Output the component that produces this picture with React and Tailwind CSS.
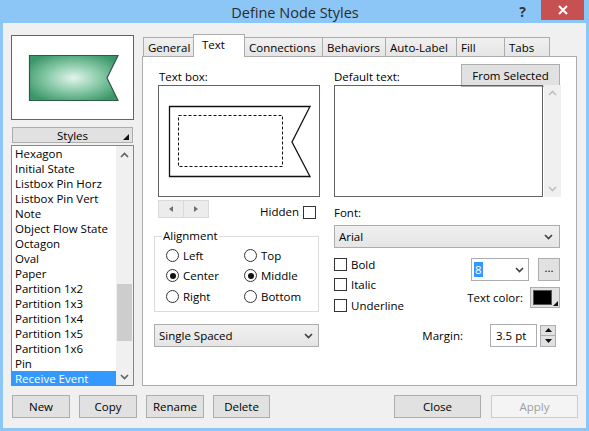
import React from "react";

const styles = [
  "Hexagon",
  "Initial State",
  "Listbox Pin Horz",
  "Listbox Pin Vert",
  "Note",
  "Object Flow State",
  "Octagon",
  "Oval",
  "Paper",
  "Partition 1x2",
  "Partition 1x3",
  "Partition 1x4",
  "Partition 1x5",
  "Partition 1x6",
  "Pin",
  "Receive Event",
];

const tabs = [
  { name: "General", w: "w-[51px]" },
  { name: "Text", w: "w-[52px]", active: true },
  { name: "Connections", w: "w-[79px]" },
  { name: "Behaviors", w: "w-[64px]" },
  { name: "Auto-Label", w: "w-[72px]" },
  { name: "Fill", w: "w-[49px]" },
  { name: "Tabs", w: "w-[46px]" },
];

function Chevron({ up, color = "#404040" }) {
  return (
    <svg width="9" height="6" viewBox="0 0 9 6">
      <path
        d={up ? "M1 5 L4.5 1.5 L8 5" : "M1 1 L4.5 4.5 L8 1"}
        fill="none"
        stroke={color}
        strokeWidth="1.6"
      />
    </svg>
  );
}

function Radio({ label, checked }) {
  return (
    <div className="flex items-center h-[20.5px]">
      <span className="w-[13px] h-[13px] rounded-full border border-[#333] bg-white flex items-center justify-center">
        {checked && <span className="w-[6px] h-[6px] rounded-full bg-[#111]" />}
      </span>
      <span className="ml-[4px]">{label}</span>
    </div>
  );
}

function Check({ label }) {
  return (
    <div className="flex items-center h-[20.5px]">
      <span className="w-[13px] h-[13px] border border-[#333] bg-white" />
      <span className="ml-[4px]">{label}</span>
    </div>
  );
}

function Btn({ children, className = "", disabled }) {
  return (
    <div
      className={
        "h-[23px] flex items-center justify-center border " +
        (disabled
          ? "border-[#cccccc] bg-[#f4f4f4] text-[#a0a0a0] "
          : "border-[#adadad] bg-[#e1e1e1] ") +
        className
      }
    >
      {children}
    </div>
  );
}

export default function App() {
  return (
    <div className="w-[589px] h-[431px] bg-[#8cc6f6] flex flex-col overflow-hidden font-['Open_Sans',sans-serif] text-[11.5px] leading-[15px] text-black">
      {/* title bar */}
      <div className="h-[23px] flex shrink-0">
        <div className="w-[76px]" />
        <div className="flex-1 text-center text-[14.5px] leading-[26px] text-[#2b2b2b]">
          Define Node Styles
        </div>
        <div className="w-[17px] text-center text-[14px] font-bold leading-[24px] text-[#333]">
          ?
        </div>
        <div className="w-[10px]" />
        <div className="w-[43px] h-[20px] bg-[#c75050] flex items-center justify-center">
          <svg width="10" height="10" viewBox="0 0 10 10">
            <path d="M1 1 L9 9 M9 1 L1 9" stroke="#fff" strokeWidth="2" />
          </svg>
        </div>
        <div className="w-[5px]" />
      </div>

      {/* client area */}
      <div className="mx-[3px] h-[405px] bg-[#f0f0f0] flex flex-col pt-[11px]">
        <div className="flex">
          {/* left column */}
          <div className="ml-[8px] w-[123px] flex flex-col">
            <div className="mt-[1px] h-[85px] border border-[#646464] bg-white">
              <svg width="121" height="83" viewBox="0 0 121 83">
                <defs>
                  <radialGradient id="g" cx="0.5" cy="0.5" r="0.6">
                    <stop offset="0" stopColor="#e4f4ec" />
                    <stop offset="0.45" stopColor="#92cfb0" />
                    <stop offset="1" stopColor="#3a9768" />
                  </radialGradient>
                </defs>
                <path
                  d="M17.5 19.5 H106 L95 42 L106 64.5 H17.5 Z"
                  fill="url(#g)"
                  stroke="#2f5a46"
                  strokeWidth="1.2"
                />
              </svg>
            </div>
            <div className="mt-[7px] mx-[1px] h-[16px] border border-[#adadad] bg-[#e1e1e1] flex items-center justify-center relative">
              <span className="leading-[14px] pt-[1px]">Styles</span>
              <svg className="absolute right-[3px] bottom-[2px]" width="6" height="6" viewBox="0 0 6 6">
                <path d="M6 0 V6 H0 Z" fill="#111" />
              </svg>
            </div>
            <div className="mt-[2px] h-[241px] border border-[#828790] bg-white flex">
              <div className="w-[104px] flex flex-col">
                {styles.map((s) => (
                  <div
                    key={s}
                    className={
                      "h-[15px] leading-[15px] pl-[3px] whitespace-nowrap " +
                      (s === "Receive Event" ? "bg-[#3399ff] text-white" : "")
                    }
                  >
                    {s}
                  </div>
                ))}
              </div>
              <div className="w-[17px] bg-[#f0f0f0] flex flex-col items-center">
                <div className="h-[17px] flex items-center justify-center">
                  <Chevron up color="#606060" />
                </div>
                <div className="h-[121px]" />
                <div className="w-[15px] h-[57px] bg-[#cdcdcd]" />
                <div className="flex-1" />
                <div className="h-[17px] flex items-center justify-center">
                  <Chevron color="#606060" />
                </div>
              </div>
            </div>
          </div>

          {/* tab control */}
          <div className="ml-[8px] w-[435px] flex flex-col">
            <div className="h-[22px] flex items-end pl-[1px]">
              {tabs.map((t) =>
                t.active ? (
                  <div
                    key={t.name}
                    className={
                      t.w +
                      " h-[23px] -ml-px -mb-px relative z-10 bg-white border border-b-0 border-[#acacac] pl-[8px] pt-[2px]"
                    }
                  >
                    {t.name}
                  </div>
                ) : (
                  <div
                    key={t.name}
                    className={
                      t.w +
                      " h-[19px] -ml-px first:ml-0 bg-gradient-to-b from-[#f0f0f0] to-[#e5e5e5] border border-b-0 border-[#acacac] pl-[4px] leading-[19px] whitespace-nowrap"
                    }
                  >
                    {t.name}
                  </div>
                )
              )}
            </div>
            <div className="h-[330px] border border-[#acacac] bg-white flex pl-[11px]">
              {/* left side of panel */}
              <div className="w-[166px] pt-[12px] flex flex-col">
                <div className="ml-[5px] h-[16px] leading-[16px]">Text box:</div>
                <div className="ml-[4px] w-[162px] h-[112px] border border-[#646464]">
                  <svg width="160" height="110" viewBox="0 0 160 110">
                    <path
                      d="M10.5 20.5 H151 L133 56 L151 90.5 H10.5 Z"
                      fill="none"
                      stroke="#111"
                      strokeWidth="1.3"
                    />
                    <rect
                      x="19.5"
                      y="29.5"
                      width="104"
                      height="51"
                      fill="none"
                      stroke="#111"
                      strokeWidth="1"
                      strokeDasharray="3 2"
                    />
                  </svg>
                </div>
                <div className="mt-[3px] h-[19px] flex justify-between">
                  <div className="ml-[4px] flex h-[18px]">
                    <div className="w-[26px] border border-[#d9d9d9] bg-[#ececec] flex items-center justify-center">
                      <svg width="4" height="6" viewBox="0 0 4 6">
                        <path d="M4 0 V6 L0 3 Z" fill="#707070" />
                      </svg>
                    </div>
                    <div className="w-[26px] -ml-px border border-[#d9d9d9] bg-[#ececec] flex items-center justify-center">
                      <svg width="4" height="6" viewBox="0 0 4 6">
                        <path d="M0 0 V6 L4 3 Z" fill="#707070" />
                      </svg>
                    </div>
                  </div>
                  <div className="flex items-end mr-[4px]">
                    <span className="leading-[14px]">Hidden</span>
                    <span className="ml-[4px] w-[13px] h-[13px] border border-[#333] bg-white" />
                  </div>
                </div>
                <fieldset className="mt-[10px] w-[165px] h-[83px] border border-[#dcdcdc]">
                  <legend className="ml-[7px] px-[1px] leading-[14px]">Alignment</legend>
                  <div className="mt-[2px] pl-[11px] flex">
                    <div className="w-[78px]">
                      <Radio label="Left" />
                      <Radio label="Center" checked />
                      <Radio label="Right" />
                    </div>
                    <div>
                      <Radio label="Top" />
                      <Radio label="Middle" checked />
                      <Radio label="Bottom" />
                    </div>
                  </div>
                </fieldset>
                <div className="mt-[12px] w-[165px] h-[23px] border border-[#acacac] bg-gradient-to-b from-[#f0f0f0] to-[#e5e5e5] flex items-center justify-between pl-[4px] pr-[5px]">
                  <span>Single Spaced</span>
                  <Chevron />
                </div>
              </div>

              {/* right side of panel */}
              <div className="ml-[14px] w-[227px] pt-[7px] flex flex-col">
                <div className="h-[21px] flex justify-between">
                  <span className="self-end leading-[16px]">Default text:</span>
                  <Btn className="w-[99px] h-[20px] mr-[1px]">From Selected</Btn>
                </div>
                <div className="h-[112px] flex">
                  <div className="w-[209px] border border-[#646464]" />
                  <div className="ml-[1px] w-[17px] bg-[#f0f0f0] flex flex-col items-center justify-between py-[5px]">
                    <Chevron up color="#c0c0c0" />
                    <Chevron color="#c0c0c0" />
                  </div>
                </div>
                <div className="mt-[8px] h-[16px] leading-[16px]">Font:</div>
                <div className="mt-[4px] w-[226px] h-[23px] border border-[#acacac] bg-gradient-to-b from-[#f0f0f0] to-[#e5e5e5] flex items-center justify-between pl-[4px] pr-[6px]">
                  <span>Arial</span>
                  <Chevron />
                </div>
                <div className="mt-[6px] flex">
                  <div className="w-[110px] flex flex-col">
                    <Check label="Bold" />
                    <Check label="Italic" />
                    <Check label="Underline" />
                  </div>
                  <div className="flex-1 flex flex-col items-end pr-[1px]">
                    <div className="mt-[4px] flex">
                      <div className="w-[58px] h-[23px] border border-[#abadb3] bg-white flex items-center justify-between pl-[2px] pr-[4px]">
                        <span className="bg-[#3399ff] text-white px-[1px] leading-[15px]">8</span>
                        <Chevron />
                      </div>
                      <Btn className="ml-[9px] w-[22px] h-[22px] pb-[4px]">...</Btn>
                    </div>
                    <div className="mt-[6px] flex items-center">
                      <span>Text color:</span>
                      <div className="ml-[7px] w-[30px] h-[21px] border border-[#adadad] bg-[#e1e1e1] flex items-center pl-[2px] relative">
                        <span className="w-[19px] h-[15px] bg-black border border-[#555]" />
                        <svg className="absolute right-[1px] bottom-[1px]" width="5" height="5" viewBox="0 0 5 5">
                          <path d="M5 0 V5 H0 Z" fill="#111" />
                        </svg>
                      </div>
                    </div>
                    <div className="mt-[16px] mr-[4px] flex items-center">
                      <span>Margin:</span>
                      <div className="ml-[27px] w-[47px] h-[23px] border border-[#abadb3] bg-white flex items-center pl-[5px]">
                        3.5 pt
                      </div>
                      <div className="ml-[3px] w-[16px] h-[22px] flex flex-col">
                        <div className="h-[11px] border border-[#adadad] bg-[#e1e1e1] flex items-center justify-center">
                          <svg width="7" height="4" viewBox="0 0 7 4">
                            <path d="M0 4 L3.5 0 L7 4 Z" fill="#111" />
                          </svg>
                        </div>
                        <div className="h-[11px] border border-t-0 border-[#adadad] bg-[#e1e1e1] flex items-center justify-center">
                          <svg width="7" height="4" viewBox="0 0 7 4">
                            <path d="M0 0 L3.5 4 L7 0 Z" fill="#111" />
                          </svg>
                        </div>
                      </div>
                    </div>
                  </div>
                </div>
              </div>
            </div>
          </div>
        </div>

        {/* bottom buttons */}
        <div className="mt-[9px] flex pl-[9px] pr-[8px]">
          <Btn className="w-[58px]">New</Btn>
          <Btn className="ml-[9px] w-[58px]">Copy</Btn>
          <Btn className="ml-[9px] w-[58px]">Rename</Btn>
          <Btn className="ml-[9px] w-[57px]">Delete</Btn>
          <Btn className="ml-auto w-[87px]">Close</Btn>
          <Btn className="ml-[10px] w-[87px]" disabled>
            Apply
          </Btn>
        </div>
      </div>
    </div>
  );
}
